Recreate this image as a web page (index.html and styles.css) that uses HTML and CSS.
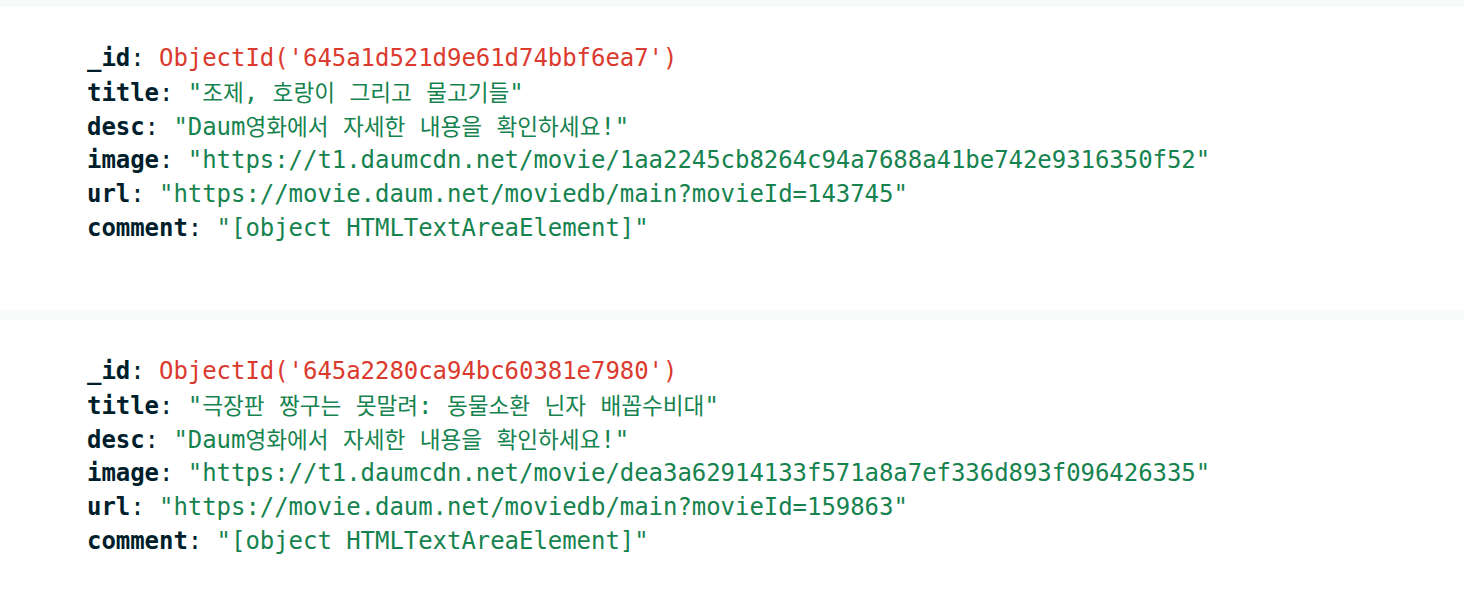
FILE: index.html
```html
<!DOCTYPE html>
<html>
<head>
<meta charset="utf-8">
<link rel="stylesheet" href="styles.css">
</head>
<body>
<div class="list">
  <div class="doc">
    <div class="line"><span class="key">_id</span><span class="colon">: </span><span class="oid">ObjectId('645a1d521d9e61d74bbf6ea7')</span></div>
    <div class="line"><span class="key">title</span><span class="colon">: </span><span class="str">"<span class="ko">조제</span>, <span class="ko">호랑이</span> <span class="ko">그리고</span> <span class="ko">물고기들</span>"</span></div>
    <div class="line"><span class="key">desc</span><span class="colon">: </span><span class="str">"Daum<span class="ko">영화에서</span> <span class="ko">자세한</span> <span class="ko">내용을</span> <span class="ko">확인하세요</span>!"</span></div>
    <div class="line"><span class="key">image</span><span class="colon">: </span><span class="str">"https://t1.daumcdn.net/movie/1aa2245cb8264c94a7688a41be742e9316350f52"</span></div>
    <div class="line"><span class="key">url</span><span class="colon">: </span><span class="str">"https://movie.daum.net/moviedb/main?movieId=143745"</span></div>
    <div class="line"><span class="key">comment</span><span class="colon">: </span><span class="str">"[object HTMLTextAreaElement]"</span></div>
  </div>
  <div class="doc">
    <div class="line"><span class="key">_id</span><span class="colon">: </span><span class="oid">ObjectId('645a2280ca94bc60381e7980')</span></div>
    <div class="line"><span class="key">title</span><span class="colon">: </span><span class="str">"<span class="ko">극장판</span> <span class="ko">짱구는</span> <span class="ko">못말려</span>: <span class="ko">동물소환</span> <span class="ko">닌자</span> <span class="ko">배꼽수비대</span>"</span></div>
    <div class="line"><span class="key">desc</span><span class="colon">: </span><span class="str">"Daum<span class="ko">영화에서</span> <span class="ko">자세한</span> <span class="ko">내용을</span> <span class="ko">확인하세요</span>!"</span></div>
    <div class="line"><span class="key">image</span><span class="colon">: </span><span class="str">"https://t1.daumcdn.net/movie/dea3a62914133f571a8a7ef336d893f096426335"</span></div>
    <div class="line"><span class="key">url</span><span class="colon">: </span><span class="str">"https://movie.daum.net/moviedb/main?movieId=159863"</span></div>
    <div class="line"><span class="key">comment</span><span class="colon">: </span><span class="str">"[object HTMLTextAreaElement]"</span></div>
  </div>
</div>
</body>
</html>
```

FILE: styles.css
```css
html, body {
  margin: 0;
  padding: 0;
  background: #f9fbfa;
}
.list {
  display: flex;
  flex-direction: column;
  gap: 10px;
  padding-top: 7px;
}
.doc {
  background: #ffffff;
  padding: 34px 0 65px 87px;
  font-family: "DejaVu Sans Mono", "Liberation Mono", "Noto Sans CJK KR", monospace;
  font-size: 24px;
  letter-spacing: -0.05px;
}
.line {
  height: 34px;
  line-height: 34px;
  white-space: pre;
}
.key {
  color: #001e2b;
  font-weight: bold;
}
.colon {
  color: #001e2b;
}
.oid {
  color: #db3a2e;
}
.str {
  color: #16834f;
}
.ko {
  font-family: "Noto Sans CJK KR", sans-serif;
  font-size: 22.6px;
  letter-spacing: 0;
}
```
